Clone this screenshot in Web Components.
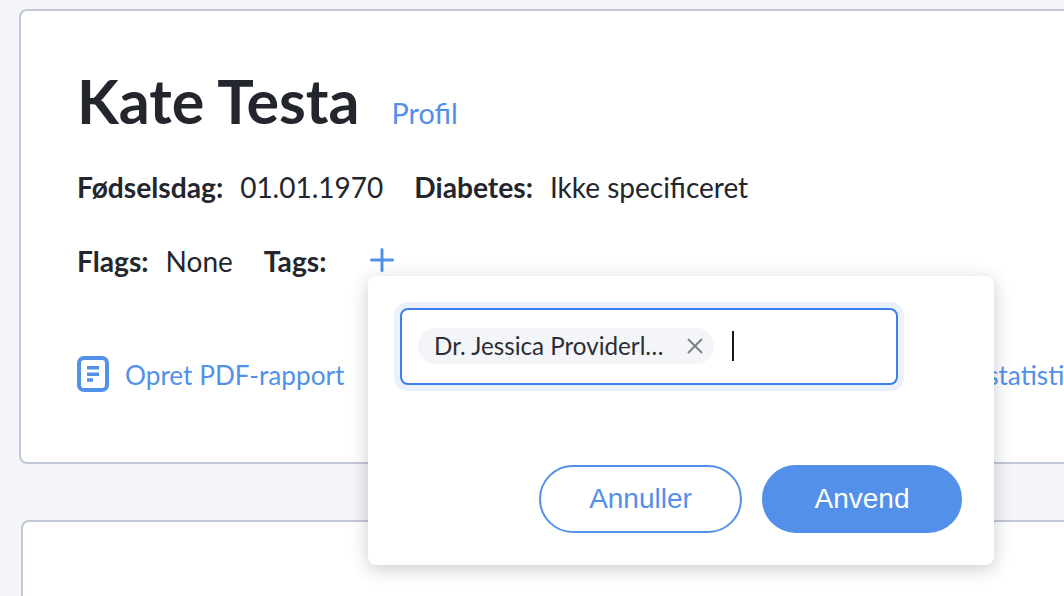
<!DOCTYPE html>
<html lang="da">
<head>
<meta charset="utf-8">
<title>Kate Testa</title>
<style>
html, body { margin: 0; height: 100%; overflow: hidden; background: #f4f5f9; }
body { font-family: Lato, sans-serif; color: #23262d; }
</style>
</head>
<body>
<template id="page-tpl">
  <style>
    :host { display: block; height: 596px; width: 1064px; overflow: hidden; position: relative; padding: 9px 0 0 19px; box-sizing: border-box; }
    ::slotted(patient-card) { margin-bottom: 56px; }
  </style>
  <slot></slot>
</template>

<template id="card-tpl">
  <style>
    :host { display: block; width: 1200px; box-sizing: border-box; background: #fff; border: 2px solid #c1c7d5; border-radius: 8px; }
    :host([blank]) { height: 200px; margin-left: 2px; }
    :host(:not([blank])) { height: 455px; padding: 53px 0 0 56px; }
  </style>
  <slot></slot>
</template>

<template id="title-tpl">
  <style>
    :host { display: flex; align-items: baseline; height: 74px; }
    h1 { margin: 0; font: 700 61px/74px Lato, sans-serif; color: #23262d; }
    a { margin-left: 32px; font-size: 28.800px; color: #5390ea; text-decoration: none; }
  </style>
  <h1><slot></slot></h1>
  <a href="#"><slot name="link"></slot></a>
</template>

<template id="fact-tpl">
  <style>
    :host { display: inline-flex; font-size: 28px; line-height: 34px; color: #23262d; }
    b { font-weight: 700; font-size: 28.200px; margin-right: 17px; }
  </style>
  <b><slot name="label"></slot></b><span><slot></slot></span>
</template>

<template id="row-tpl">
  <style>
    :host { display: flex; align-items: center; height: 34px; }
  </style>
  <slot></slot>
</template>

<template id="action-tpl">
  <style>
    :host { display: inline-flex; align-items: center; gap: 16px; font-size: 26.200px; line-height: 34px; color: #5390ea; white-space: nowrap; }
    ::slotted(svg) { display: block; }
    span { padding-top: 2px; }
  </style>
  <slot name="icon"></slot><span><slot></slot></span>
</template>

<template id="popover-tpl">
  <style>
    :host { position: absolute; left: 368px; top: 276px; width: 626px; height: 289px; box-sizing: border-box; padding: 32px; background: #fff; border-radius: 8px; box-shadow: 0 4px 18px rgba(35, 38, 45, .24); display: flex; flex-direction: column; justify-content: space-between; }
    .buttons { display: flex; justify-content: flex-end; gap: 20px; }
  </style>
  <slot></slot>
  <div class="buttons"><slot name="buttons"></slot></div>
</template>

<template id="input-tpl">
  <style>
    :host { display: flex; align-items: center; box-sizing: border-box; width: 498px; height: 77px; padding: 0 0 2px 16px; background: #fff; border: 2px solid #3b7ff0; border-radius: 8px; box-shadow: 0 0 0 6px #eaf0fc; }
    i { width: 2px; height: 30px; background: #16181d; margin-left: 18px; }
  </style>
  <slot></slot><i></i>
</template>

<template id="chip-tpl">
  <style>
    :host { display: inline-flex; align-items: center; height: 36px; box-sizing: border-box; width: 296px; padding: 0 10px 0 16px; background: #f4f5f9; border-radius: 18px; font-size: 24.200px; color: #2b2e35; white-space: nowrap; }
    span { flex: 1; overflow: hidden; text-overflow: ellipsis; margin-right: 17px; }
    svg { display: block; flex: none; }
  </style>
  <span><slot></slot></span>
  <svg width="18" height="18" viewBox="0 0 18 18" fill="none" stroke="#7d8087" stroke-width="2"><path d="M2 2l14 14M16 2L2 16"/></svg>
</template>

<template id="btn-tpl">
  <style>
    :host { display: inline-flex; align-items: center; justify-content: center; box-sizing: border-box; height: 68px; border-radius: 34px; border: 2px solid #5390ea; font: 28px "Liberation Sans", Arial, sans-serif; color: #5390ea; background: #fff; }
    :host([primary]) { background: #5390ea; color: #fff; }
  </style>
  <slot></slot>
</template>

<patient-page>
  <patient-card>
    <card-title>Kate Testa<span slot="link">Profil</span></card-title>
    <fact-row style="margin-top:32px">
      <patient-fact><span slot="label">Fødselsdag:</span>01.01.1970</patient-fact>
      <patient-fact style="margin-left:31px"><span slot="label">Diabetes:</span>Ikke specificeret</patient-fact>
    </fact-row>
    <fact-row style="margin-top:40px">
      <patient-fact><span slot="label">Flags:</span>None</patient-fact>
      <patient-fact style="margin-left:31px"><span slot="label">Tags:</span></patient-fact>
      <svg style="margin:0 0 2px 27px" width="24" height="24" viewBox="0 0 24 24" fill="none" stroke="#5390ea" stroke-width="3" stroke-linecap="round"><path d="M12 1.500v21M1.500 12h21"/></svg>
    </fact-row>
    <fact-row style="margin-top:79px">
      <card-action>
        <svg slot="icon" width="32" height="36" viewBox="0 0 32 36" fill="none"><rect x="2" y="2" width="28" height="32" rx="5" stroke="#5390ea" stroke-width="4"/><path d="M10 11.700h12M10 18.200h12M10 24h6" stroke="#5390ea" stroke-width="3.400"/></svg>
        Opret PDF-rapport
      </card-action>
      <card-action style="margin-left:608px">Se statistik</card-action>
    </fact-row>
  </patient-card>
  <patient-card blank></patient-card>

  <tag-popover>
    <tag-input><tag-chip>Dr. Jessica Providerlastname</tag-chip></tag-input>
    <pill-button slot="buttons" style="width:203px">Annuller</pill-button>
    <pill-button slot="buttons" primary style="width:200px">Anvend</pill-button>
  </tag-popover>
</patient-page>

<script>
// every element just stamps its template into an open shadow root
const simple = {
  'patient-page': 'page-tpl',
  'patient-card': 'card-tpl',
  'card-title': 'title-tpl',
  'patient-fact': 'fact-tpl',
  'fact-row': 'row-tpl',
  'card-action': 'action-tpl',
  'tag-popover': 'popover-tpl',
  'tag-input': 'input-tpl',
  'tag-chip': 'chip-tpl',
  'pill-button': 'btn-tpl',
};
for (let [name, tpl] of Object.entries(simple)) {
  customElements.define(name, class extends HTMLElement {
    constructor() {
      super();
      let shadowRoot = this.attachShadow({ mode: 'open' });
      shadowRoot.appendChild(document.getElementById(tpl).content.cloneNode(true));
    }
  });
}
</script>
</body>
</html>
